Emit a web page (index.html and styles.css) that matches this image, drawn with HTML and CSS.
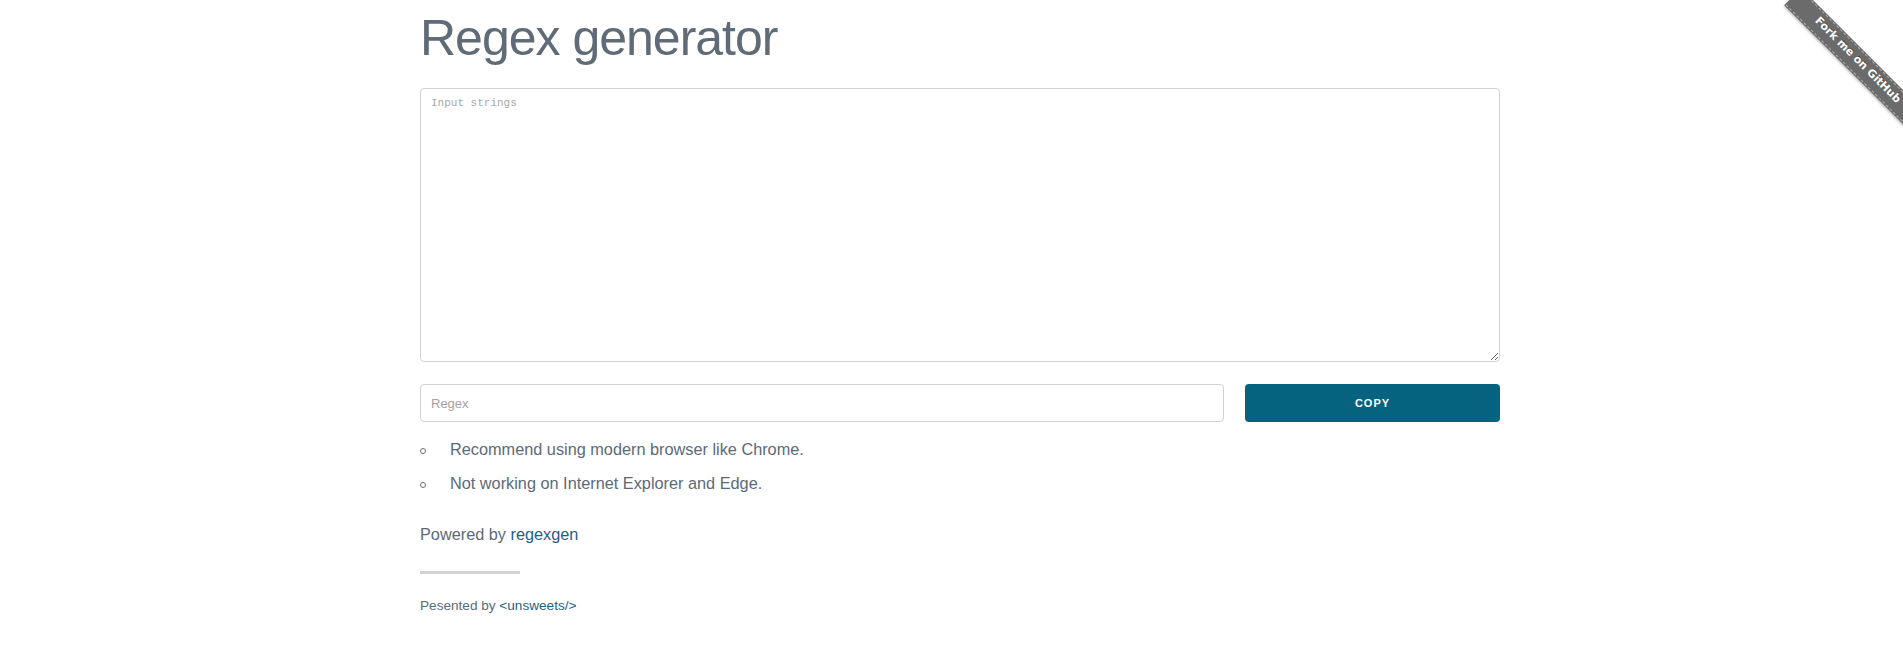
FILE: index.html
```html
<!DOCTYPE html>
<html lang="en">
<head>
<meta charset="utf-8">
<title>Regex generator</title>
<link rel="stylesheet" href="styles.css">
</head>
<body>
<div class="page">
  <main class="container">
    <h1 class="title">Regex generator</h1>
    <textarea class="strings" placeholder="Input strings"></textarea>
    <div class="regex-row">
      <input class="regex" type="text" placeholder="Regex">
      <button class="copy" type="button">Copy</button>
    </div>
    <ul class="notes">
      <li>Recommend using modern browser like Chrome.</li>
      <li>Not working on Internet Explorer and Edge.</li>
    </ul>
    <p class="powered">Powered by <a href="#">regexgen</a></p>
    <hr class="rule">
    <p class="credit">Pesented by <a href="#">&lt;unsweets/&gt;</a></p>
  </main>
</div>
<a class="ribbon-wrap" href="#"><span class="ribbon">Fork me on GitHub</span></a>
</body>
</html>
```
FILE: styles.css
```css
html, body {
  margin: 0;
  padding: 0;
  background: #fff;
}
body {
  font-family: "Liberation Sans", Arial, sans-serif;
  color: #5b6a78;
  font-size: 16.3px;
  line-height: 24px;
  height: 655px;
  overflow: hidden;
}
.page {
  padding: 8px 0 0 17px;
}
.container {
  width: 1080px;
  margin: 0 auto;
  display: flex;
  flex-direction: column;
}
.title {
  margin: 0 0 20px;
  font-size: 50px;
  line-height: 60px;
  font-weight: 400;
  letter-spacing: -1px;
  color: #5f6b76;
}
.strings {
  box-sizing: border-box;
  width: 1080px;
  height: 274px;
  margin: 0 0 22px;
  padding: 6px 10px;
  border: 1px solid #d1d1d1;
  border-radius: 4px;
  font-family: "Liberation Mono", monospace;
  font-size: 11px;
  line-height: 16px;
  color: #333;
  outline: none;
}
.strings::placeholder {
  color: #a8a8a8;
}
.regex-row {
  display: flex;
  gap: 21px;
  margin-bottom: 15px;
}
.regex {
  box-sizing: border-box;
  flex: 1;
  height: 38px;
  margin: 0;
  padding: 6px 10px;
  border: 1px solid #d1d1d1;
  border-radius: 4px;
  font-family: "Liberation Sans", Arial, sans-serif;
  font-size: 13px;
  color: #333;
  outline: none;
}
.regex::placeholder {
  color: #a3a3a3;
}
.copy {
  box-sizing: border-box;
  width: 255px;
  height: 38px;
  margin: 0;
  padding: 0;
  border: none;
  border-radius: 4px;
  background: #05637f;
  color: #fff;
  font-family: "Liberation Sans", Arial, sans-serif;
  font-size: 11px;
  font-weight: 700;
  letter-spacing: 1px;
  text-transform: uppercase;
  cursor: pointer;
}
.notes {
  list-style: none;
  margin: 0 0 17px;
  padding: 0;
}
.notes li {
  display: flex;
  align-items: center;
  margin-bottom: 10px;
}
.notes li::before {
  content: "";
  box-sizing: border-box;
  width: 6px;
  height: 6px;
  margin: 3px 24px 0 0;
  border: 1px solid #6b7077;
  border-radius: 50%;
  flex: none;
}
.powered {
  margin: 0;
}
a {
  color: #1f5f87;
  text-decoration: none;
}
.rule {
  width: 100px;
  height: 3px;
  margin: 25px 0 22px;
  border: none;
  background: #d3d3d3;
}
.credit {
  margin: 0;
  font-size: 13.6px;
  line-height: 20px;
}
.ribbon-wrap {
  position: absolute;
  top: 0;
  right: 0;
  width: 124px;
  height: 134px;
  overflow: hidden;
  display: block;
}
.ribbon {
  position: absolute;
  left: -12px;
  top: 50px;
  width: 180px;
  height: 22px;
  box-sizing: border-box;
  transform: rotate(45deg);
  background: #6b6b6b;
  color: #fff;
  font-family: "DejaVu Sans", sans-serif;
  font-size: 11px;
  font-weight: 700;
  line-height: 18px;
  text-align: center;
  white-space: nowrap;
  border-top: 1px dashed rgba(255, 255, 255, 0.45);
  border-bottom: 1px dashed rgba(255, 255, 255, 0.45);
  box-shadow: 0 0 0 1px #6b6b6b, 0 2px 3px rgba(0, 0, 0, 0.35);
  text-shadow: 0 -1px 0 rgba(0, 0, 0, 0.4);
}
```
